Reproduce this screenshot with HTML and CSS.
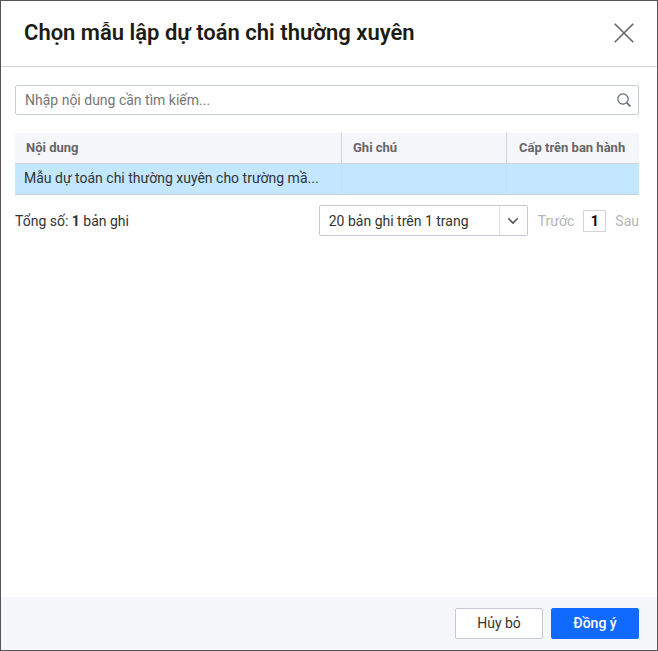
FILE: index.html
```html
<!DOCTYPE html>
<html lang="vi">
<head>
<meta charset="utf-8">
<meta name="viewport" content="width=device-width, initial-scale=1">
<title>Chọn mẫu lập dự toán chi thường xuyên</title>
<link rel="stylesheet" href="styles.css">
</head>
<body>
<div class="dialog" role="dialog" aria-labelledby="dialog-title">
  <header class="dialog-header">
    <h1 id="dialog-title" class="dialog-title">Chọn mẫu lập dự toán chi thường xuyên</h1>
    <button type="button" class="close-button" aria-label="Đóng">
      <svg width="20" height="20" viewBox="0 0 20 20" aria-hidden="true"><path d="M0.7 0.7 19.3 19.3M19.3 0.7 0.7 19.3" fill="none" stroke="#666" stroke-width="1.6"/></svg>
    </button>
  </header>
  <main class="dialog-body">
    <div class="search">
      <input class="search-input" type="text" aria-label="Tìm kiếm" placeholder="Nhập nội dung cần tìm kiếm...">
      <button type="button" class="search-button" aria-label="Tìm">
        <svg width="14" height="14" viewBox="0 0 14 14" aria-hidden="true"><circle cx="6" cy="6" r="5.2" fill="none" stroke="#5a6575" stroke-width="1.2"/><path d="M9.7 9.7 13.4 13.4" fill="none" stroke="#5a6575" stroke-width="1.5"/></svg>
      </button>
    </div>
    <table class="grid">
      <colgroup><col><col class="col-note"><col class="col-issued"></colgroup>
      <thead>
        <tr><th scope="col">Nội dung</th><th scope="col">Ghi chú</th><th scope="col">Cấp trên ban hành</th></tr>
      </thead>
      <tbody>
        <tr><td>Mẫu dự toán chi thường xuyên cho trường mầ...</td><td></td><td></td></tr>
      </tbody>
    </table>
    <div class="pager">
      <p class="total">Tổng số: <strong>1</strong> bản ghi</p>
      <div class="page-size">
        <select class="page-size-select" aria-label="Số bản ghi trên trang"><option>20 bản ghi trên 1 trang</option></select>
        <span class="page-size-arrow"><svg width="12" height="8" viewBox="0 0 12 8" aria-hidden="true"><path d="M1.3 1.3 6 6 10.7 1.3" fill="none" stroke="#555" stroke-width="1.6"/></svg></span>
      </div>
      <nav class="pages" aria-label="Phân trang">
        <button type="button" class="page-step" disabled>Trước</button>
        <button type="button" class="page-current" aria-current="page">1</button>
        <button type="button" class="page-step" disabled>Sau</button>
      </nav>
    </div>
  </main>
  <footer class="dialog-footer">
    <button type="button" class="button">Hủy bỏ</button>
    <button type="button" class="button button-primary">Đồng ý</button>
  </footer>
</div>
</body>
</html>
```

FILE: styles.css
```css
* {
  box-sizing: border-box;
}

body {
  margin: 0;
  background: #fff;
  color: #333;
  font: 14px/20px Roboto, sans-serif;
}

button,
input,
select {
  margin: 0;
  padding: 0;
  border: 0;
  background: none;
  color: inherit;
  font: inherit;
}

.dialog {
  display: flex;
  flex-direction: column;
  min-height: 100vh;
  border: 1px solid #555;
}

.dialog-header {
  display: flex;
  align-items: center;
  justify-content: space-between;
  padding: 16px 20px 18px 23px;
  border-bottom: 1px solid #d3d3de;
}

.dialog-title {
  margin: 0;
  color: #1c1c14;
  font-size: 22px;
  font-weight: 600;
  line-height: 31px;
}

.close-button {
  display: flex;
  padding: 3px;
}

.dialog-body {
  flex: 1;
  padding: 18px 18px 18px 14px;
}

.search {
  display: flex;
  height: 30px;
  border: 1px solid #c4ccd8;
  border-radius: 2px;
}

.search-input {
  flex: 1;
  min-width: 0;
  padding-left: 9px;
}

.search-input::placeholder {
  color: #757575;
  opacity: 1;
}

.search-button {
  display: flex;
  align-items: center;
  padding: 0 7px;
}

.grid {
  width: 100%;
  margin-top: 18px;
  border-spacing: 0;
  table-layout: fixed;
}

.col-note {
  width: 165px;
}

.col-issued {
  width: 132px;
}

.grid th {
  height: 31px;
  padding: 0 11px;
  border-right: 1px solid #d0d3da;
  border-bottom: 1px solid #d0d3da;
  background: #f5f7fb;
  color: #666;
  font-size: 13px;
  font-weight: 700;
  text-align: left;
  white-space: nowrap;
}

.grid td {
  height: 31px;
  padding: 0 9px 2px;
  overflow: hidden;
  border-right: 1px dotted #c8d4de;
  border-bottom: 1px solid #c8d0d9;
  background: #c2e7ff;
  text-overflow: ellipsis;
  white-space: nowrap;
}

.grid th:last-child,
.grid td:last-child {
  padding-right: 0;
  border-right: 0;
}

.grid th:last-child {
  padding-left: 12px;
}

.pager {
  display: flex;
  align-items: center;
  margin-top: 10px;
}

.total {
  margin: 0 auto 0 0;
}

.page-size {
  display: flex;
  position: relative;
  width: 209px;
  height: 31px;
  border: 1px solid #c4c8d2;
  border-radius: 2px;
}

.page-size-select {
  flex: 1;
  padding-left: 9px;
  appearance: none;
}

.page-size-arrow {
  display: flex;
  position: absolute;
  top: 0;
  right: 0;
  bottom: 0;
  align-items: center;
  justify-content: center;
  width: 28px;
  border-left: 1px solid #dcdfe5;
  pointer-events: none;
}

.pages {
  display: flex;
  align-items: center;
  gap: 9px;
  margin-left: 10px;
}

.page-step {
  color: #b5b5b5;
}

.page-current {
  width: 23px;
  height: 22px;
  border: 1px solid #d3d3de;
  color: #000;
  font-weight: 700;
}

.dialog-footer {
  display: flex;
  justify-content: flex-end;
  gap: 8px;
  padding: 11px 18px;
  background: #f5f7fa;
}

.button {
  width: 88px;
  height: 31px;
  padding-bottom: 1px;
  border: 1px solid #c4c8d2;
  border-radius: 2px;
  background: #fff;
}

.button-primary {
  border-color: #116aff;
  background: #116aff;
  color: #fff;
  font-weight: 500;
}
```
